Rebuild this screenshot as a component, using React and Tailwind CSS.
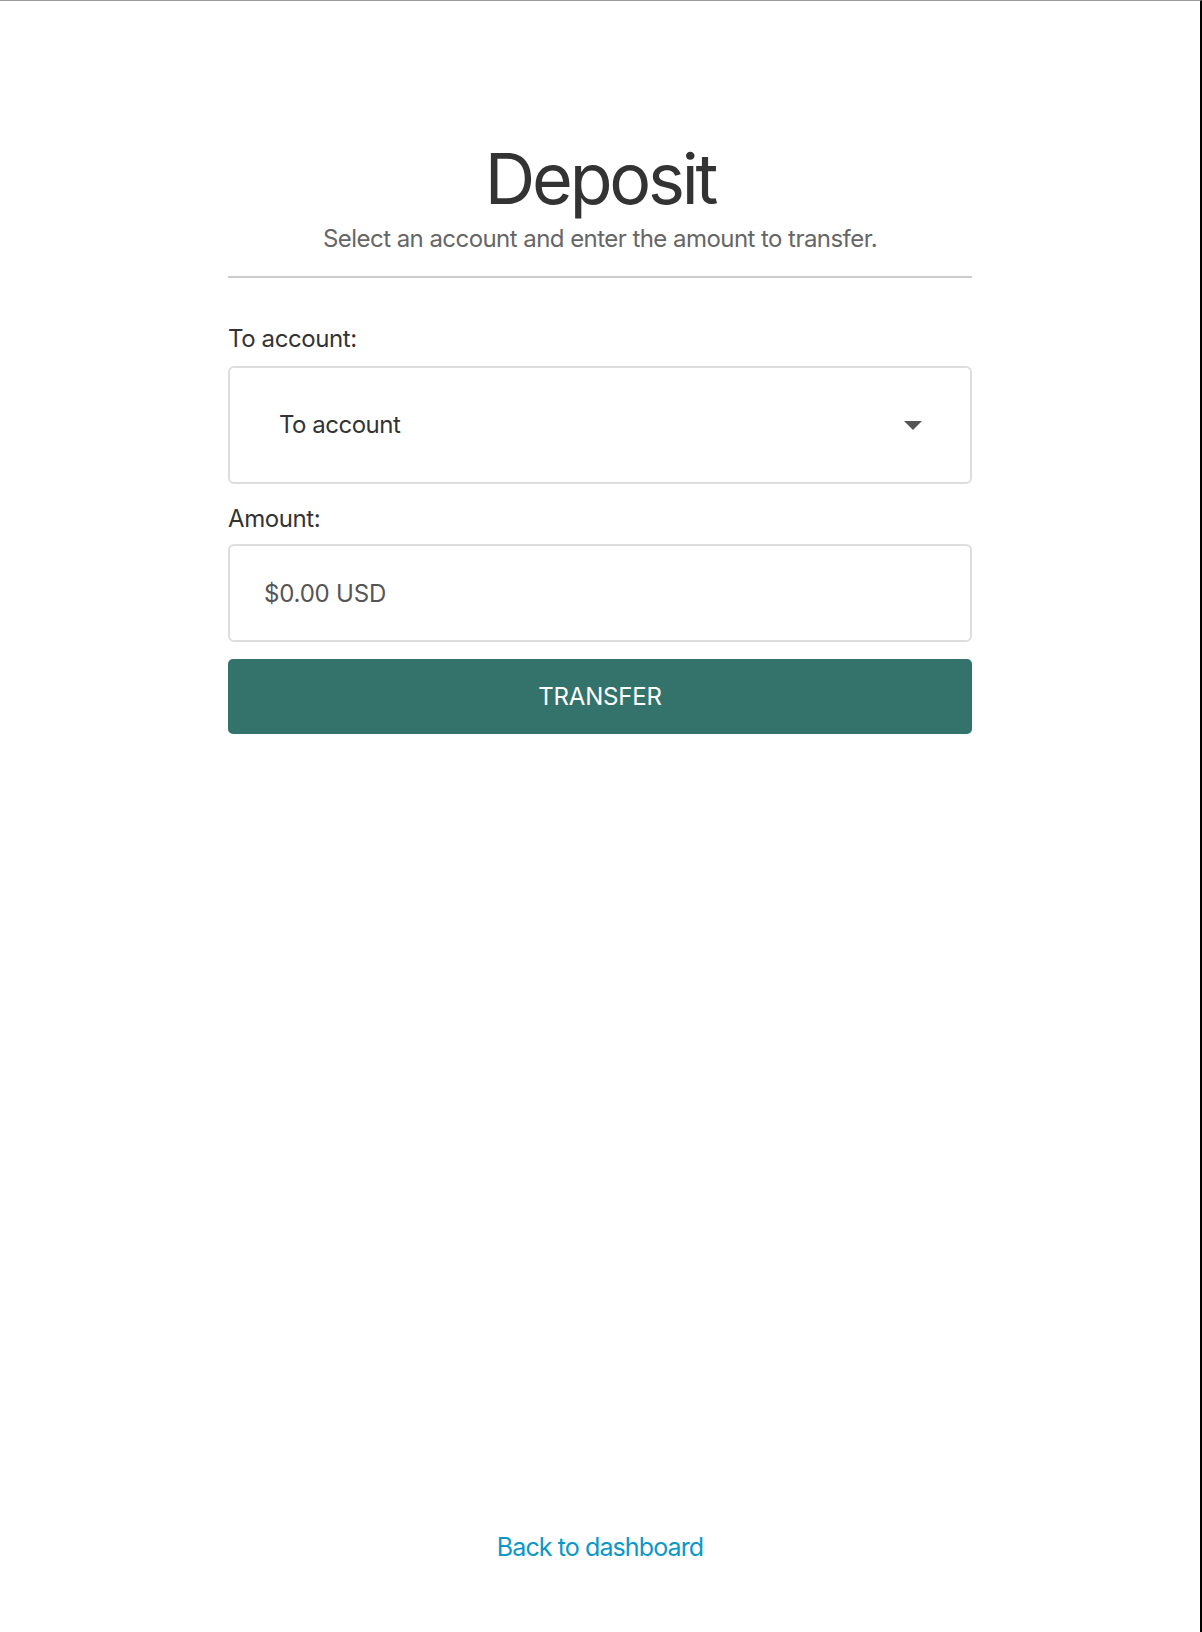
import React, { useState } from "react";

// deposit screen
function App() {
  const [account, setAccount] = useState("");
  const [amount, setAmount] = useState("");

  return (
    <div className="flex flex-col min-h-[1632px] w-[1202px] bg-white border-t border-t-[#9a9a9a] border-r-2 border-r-black font-['Inter',sans-serif]">
      <div className="w-[744px] mx-auto pt-[136px]">
        <h1 className="text-center text-[70px] leading-[84px] tracking-[-3.2px] text-[#333333]">Deposit</h1>
        <p className="text-center text-[24px] leading-[32px] tracking-[-0.55px] text-[#666666] mt-[2px]">
          Select an account and enter the amount to transfer.
        </p>
        <div className="h-[2px] bg-[#cccccc] mt-[21px]"></div>

        <label className="block mt-[46px] text-[24px] leading-[30px] tracking-[-0.4px] text-[#333333]">To account:</label>
        <div className="relative mt-[12px]">
          <select
            value={account}
            onChange={(e) => setAccount(e.target.value)}
            className="appearance-none w-full h-[118px] border-2 border-[#dddddd] rounded-[6px] bg-white pl-[49px] text-[24px] tracking-[-0.5px] text-[#333333] outline-none"
          >
            <option value="">To account</option>
          </select>
          <svg className="absolute right-[50px] top-[55px] pointer-events-none" width="18" height="9" viewBox="0 0 18 9">
            <polygon points="0,0 18,0 9,9" fill="#555555" />
          </svg>
        </div>

        <label className="block mt-[20px] text-[24px] leading-[30px] tracking-[-0.4px] text-[#333333]">Amount:</label>
        <input
          value={amount}
          onChange={(e) => setAmount(e.target.value)}
          placeholder="$0.00 USD"
          className="block w-full mt-[10px] h-[98px] border-2 border-[#dddddd] rounded-[6px] pl-[34px] text-[24px] tracking-[-0.2px] text-[#444444] placeholder:text-[#555555] outline-none"
        />
        <button className="w-full mt-[17px] h-[75px] rounded-[5px] bg-[#34736b] text-white text-[24px] tracking-[-0.2px]">
          TRANSFER
        </button>
      </div>

      <div className="mt-auto pb-[66px] text-center">
        <a href="#" className="text-[25px] tracking-[-0.9px] text-[#0a98c8]">Back to dashboard</a>
      </div>
    </div>
  );
}

export default App;
